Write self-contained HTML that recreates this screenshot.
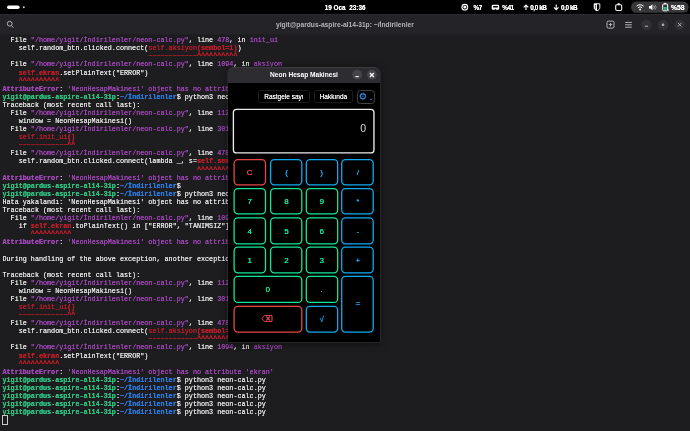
<!DOCTYPE html>
<html lang="tr"><head><meta charset="utf-8"><title>Neon Hesap Makinesi</title>
<style>
html,body{margin:0;padding:0;background:#1d1d20;}
body{width:690px;height:431px;position:relative;overflow:hidden;font-family:"Liberation Sans",sans-serif;}
#top{position:absolute;left:0;top:0;width:690px;height:14px;background:#000;color:#fff;font-weight:bold;font-size:6.4px;line-height:14px;}
#top span{position:absolute;top:0.8px;white-space:pre;text-shadow:0 0 0.3px #fff;}
#top span.s{letter-spacing:-0.42px}
#hdr{position:absolute;left:0;top:14px;width:690px;height:21px;background:#242428;box-shadow:inset 0 1px 0 #2b2b2f,inset 0 -1px 0 #1f1f22;}
#hdr .t{position:absolute;left:276px;top:0;line-height:21.6px;font-size:6.71px;font-weight:bold;color:#b4b4b6;white-space:pre;}
.cb{position:absolute;width:10.6px;height:10.6px;border-radius:50%;background:#313135;}
#term{position:absolute;left:0;top:35px;width:690px;height:396px;background:#1d1d20;}
.ln{position:absolute;left:2.5px;white-space:pre;font-family:"Liberation Mono",monospace;font-size:6.755px;line-height:7.093px;height:7.093px;color:#e4e4e4;text-shadow:0 0 0.35px currentColor;transform:scaleY(1.14);transform-origin:0 0;}
.ln b{font-weight:bold}
.p{color:#a347ba}.r{color:#c01c28}.g{color:#2ec27e}.b{color:#2a7bde}
#cur{position:absolute;left:2.4px;top:415.44px;width:3.2px;height:7.4px;border:0.9px solid #c8c8c8;}
#win{position:absolute;left:228.0px;top:67.0px;width:152px;height:275px;background:#000;border-radius:5.5px 5.5px 0 0;box-shadow:0 2px 7px 1px rgba(0,0,0,.45);z-index:5;}
#wo{position:absolute;left:227px;top:67px;width:152px;height:274px;border:1px solid rgba(255,255,255,.075);border-radius:6px 6px 0 0;z-index:6;}
#wt{position:absolute;left:0;top:0;width:100%;height:16px;border-radius:5.5px 5.5px 0 0;background:#2d2d31;color:#fff;font-weight:bold;font-size:6.6px;line-height:15.4px;text-align:center;}
.wb{position:absolute;top:2.8px;width:10px;height:10px;border-radius:50%;background:#444448;}
.tb{position:absolute;top:23.4px;height:11.4px;border:0.8px solid #1a1a1a;border-radius:1.5px;color:#f2f2f2;text-shadow:0 0 0.25px #fff;font-size:6.5px;line-height:11.6px;text-align:center;white-space:pre;}
#disp{position:absolute;left:5.1px;top:41.8px;width:139.4px;height:42.8px;border:1.2px solid transparent;border-radius:3.5px;color:#dedede;font-size:10.5px;line-height:37.4px;text-align:right;}
#disp span{padding-right:7.2px}
.k{position:absolute;box-sizing:border-box;text-shadow:0 0 0.3px currentColor;font-family:"Liberation Sans",sans-serif;font-size:8.1px;padding-top:0.5px;text-align:center;display:flex;align-items:center;justify-content:center;}
.kr{color:#f04a4a}
.kb{color:#10b0ff}
.kg{color:#12f09a}
#lines,#top,#hdr .t,#wt,.tb,#disp,.k{will-change:transform}
</style></head><body>
<div id="top">
<svg width="690" height="14" viewBox="0 0 690 14" style="position:absolute;left:0;top:0">
<rect x="7" y="5.5" width="12.6" height="3.5" rx="1.75" fill="#fff"/>
<circle cx="23.8" cy="7.25" r="1" fill="#ccc"/>
<!-- cpu -->
<circle cx="464.8" cy="7.2" r="3.4" fill="#fff"/>
<circle cx="464.8" cy="7.2" r="2.25" fill="#111"/>
<circle cx="464.8" cy="7.2" r="1.35" fill="#fff"/>
<!-- ram -->
<rect x="491.7" y="4.7" width="7.5" height="5" rx="1.3" fill="#fff"/>
<rect x="493.1" y="5.9" width="4.7" height="1.7" rx="0.3" fill="#000"/>
<rect x="494.9" y="8.9" width="1.1" height="0.9" fill="#000"/>
<!-- arrows -->
<path d="M526 10.1V5M523.7 7.3 526 5l2.3 2.3" fill="none" stroke="#fff" stroke-width="1.1"/>
<path d="M556.2 4.5v5.1M553.9 7.3l2.3 2.3 2.3-2.3" fill="none" stroke="#fff" stroke-width="1.1"/>
<!-- shield -->
<path d="M594.2 3.8h5.6v3.6c0 1.7-1.2 2.8-2.8 3.4-1.6-.6-2.8-1.7-2.8-3.4z" fill="none" stroke="#fff" stroke-width="0.95"/>
<path d="M594.2 3.8h2.8v7c-1.6-.6-2.8-1.7-2.8-3.4z" fill="#fff"/>
<path d="M595.6 5v3.6" stroke="#000" stroke-width="0.6"/>
<!-- clipboard -->
<rect x="615.7" y="4.7" width="6" height="5.7" rx="1.1" fill="none" stroke="#fff" stroke-width="1.05"/>
<rect x="617.5" y="3.3" width="2.4" height="1.7" rx="0.4" fill="#fff"/>
<!-- pill -->
<rect x="631" y="1.6" width="57.6" height="11.2" rx="5.6" fill="#38383a"/>
<!-- wifi -->
<path d="M636.6 6.2a5 5 0 0 1 7 0" fill="none" stroke="#fff" stroke-width="1"/>
<path d="M638 7.8a3 3 0 0 1 4.2 0" fill="none" stroke="#fff" stroke-width="1"/>
<circle cx="640.1" cy="9.5" r="0.9" fill="#fff"/>
<!-- volume -->
<path d="M649 6h1.4l2-1.8v6l-2-1.8H649z" fill="#fff"/>
<path d="M653.6 5.6a2.2 2.2 0 0 1 0 3.2" fill="none" stroke="#fff" stroke-width="0.7"/>
<path d="M654.9 4.5a3.8 3.8 0 0 1 0 5.4" fill="none" stroke="#aaa" stroke-width="0.7"/>
<!-- battery -->
<rect x="662.7" y="4" width="5" height="6.8" rx="1" fill="none" stroke="#fff" stroke-width="1"/>
<rect x="664.2" y="2.9" width="2" height="1.2" fill="#fff"/>
<rect x="663.8" y="7" width="2.8" height="2.8" fill="#2ec27e"/>
<path d="M667 9.2l1.8 1.2" stroke="#fff" stroke-width="1"/>
</svg>
<span style="left:324.7px">19 Oca  23:36</span>
<span class="s" style="left:473.5px">%7</span>
<span class="s" style="left:502.2px">%41</span>
<span class="s" style="left:530.2px">0,0 kB</span>
<span class="s" style="left:561px">0,0 kB</span>
<span style="left:671px;font-size:6.8px">%58</span>
</div>
<div id="hdr">
<svg width="690" height="21" viewBox="0 14 690 21" style="position:absolute;left:0;top:0">
<circle cx="9.7" cy="23.7" r="2.4" fill="none" stroke="#c0c0c0" stroke-width="0.9"/>
<path d="M11.4 25.6l1.9 2" stroke="#c0c0c0" stroke-width="1"/>
<rect x="607" y="21.1" width="7" height="7" rx="1.4" fill="none" stroke="#c4c4c4" stroke-width="0.9"/>
<path d="M610.5 22.9v3.4M608.8 24.6h3.4" stroke="#c4c4c4" stroke-width="0.9"/>
<path d="M625.2 22.4h6.6M625.2 24.8h6.6M625.2 27.2h6.6" stroke="#c4c4c4" stroke-width="0.9"/>
<circle cx="646.5" cy="24.7" r="5.3" fill="#313135"/>
<circle cx="663" cy="24.7" r="5.3" fill="#313135"/>
<circle cx="679.7" cy="24.7" r="5.3" fill="#313135"/>
<path d="M645 26.2h3" stroke="#b4b4b6" stroke-width="1"/>
<rect x="661.8" y="23.6" width="2.4" height="2.3" rx="0.5" fill="#a8a8aa"/>
<path d="M678 23l3.4 3.4M681.4 23l-3.4 3.4" stroke="#b8b8ba" stroke-width="0.9"/>
</svg>
<div class="t">yigit@pardus-aspire-al14-31p: ~/İndirilenler</div>
</div>
<div id="term">
</div>
<div id="lines">
<div class="ln" style="top:36.20px">  File <span class="p">"/home/yigit/İndirilenler/neon-calc.py"</span>, line <span class="p">478</span>, in <span class="p">init_ui</span></div>
<div class="ln" style="top:44.29px">    self.random_btn.clicked.connect(<span class="r">self.aksiyon</span><b class="r">(sembol=1)</b>)</div>
<div class="ln" style="top:52.37px">                                    <span class="r">~~~~~~~~~~~~</span><b class="r">^^^^^^^^^^</b></div>
<div class="ln" style="top:60.46px">  File <span class="p">"/home/yigit/İndirilenler/neon-calc.py"</span>, line <span class="p">1094</span>, in <span class="p">aksiyon</span></div>
<div class="ln" style="top:68.54px">    <b class="r">self.ekran</b>.setPlainText("ERROR")</div>
<div class="ln" style="top:76.63px">    <b class="r">^^^^^^^^^^</b></div>
<div class="ln" style="top:84.72px"><b class="p">AttributeError</b>: <span class="p">'NeonHesapMakinesi' object has no attribute 'ekran'</span></div>
<div class="ln" style="top:92.80px"><b class="g">yigit@pardus-aspire-al14-31p</b>:<b class="b">~/İndirilenler</b>$ python3 neon-calc.py</div>
<div class="ln" style="top:100.89px">Traceback (most recent call last):</div>
<div class="ln" style="top:108.97px">  File <span class="p">"/home/yigit/İndirilenler/neon-calc.py"</span>, line <span class="p">1122</span>, in <span class="p">&lt;module&gt;</span></div>
<div class="ln" style="top:117.06px">    window = NeonHesapMakinesi()</div>
<div class="ln" style="top:125.15px">  File <span class="p">"/home/yigit/İndirilenler/neon-calc.py"</span>, line <span class="p">301</span>, in <span class="p">__init__</span></div>
<div class="ln" style="top:133.23px">    <span class="r">self.init_ui</span><b class="r">()</b></div>
<div class="ln" style="top:141.32px">    <span class="r">~~~~~~~~~~~~</span><b class="r">^^</b></div>
<div class="ln" style="top:149.40px">  File <span class="p">"/home/yigit/İndirilenler/neon-calc.py"</span>, line <span class="p">478</span>, in <span class="p">init_ui</span></div>
<div class="ln" style="top:157.49px">    self.random_btn.clicked.connect(lambda _, s=<b class="r">self.sembol</b>: self.aksiyon(s))</div>
<div class="ln" style="top:165.58px">                                                <b class="r">^^^^^^^^^^^</b></div>
<div class="ln" style="top:173.66px"><b class="p">AttributeError</b>: <span class="p">'NeonHesapMakinesi' object has no attribute 'sembol'</span></div>
<div class="ln" style="top:181.75px"><b class="g">yigit@pardus-aspire-al14-31p</b>:<b class="b">~/İndirilenler</b>$</div>
<div class="ln" style="top:189.83px"><b class="g">yigit@pardus-aspire-al14-31p</b>:<b class="b">~/İndirilenler</b>$ python3 neon-calc.py</div>
<div class="ln" style="top:197.92px">Hata yakalandı: 'NeonHesapMakinesi' object has no attribute 'ekran'</div>
<div class="ln" style="top:206.01px">Traceback (most recent call last):</div>
<div class="ln" style="top:214.09px">  File <span class="p">"/home/yigit/İndirilenler/neon-calc.py"</span>, line <span class="p">1094</span>, in <span class="p">aksiyon</span></div>
<div class="ln" style="top:222.18px">    if <b class="r">self.ekran</b>.toPlainText() in ["ERROR", "TANIMSIZ"]:</div>
<div class="ln" style="top:230.26px">       <b class="r">^^^^^^^^^^</b></div>
<div class="ln" style="top:238.35px"><b class="p">AttributeError</b>: <span class="p">'NeonHesapMakinesi' object has no attribute 'ekran'</span></div>
<div class="ln" style="top:254.52px">During handling of the above exception, another exception occurred:</div>
<div class="ln" style="top:270.69px">Traceback (most recent call last):</div>
<div class="ln" style="top:278.78px">  File <span class="p">"/home/yigit/İndirilenler/neon-calc.py"</span>, line <span class="p">1122</span>, in <span class="p">&lt;module&gt;</span></div>
<div class="ln" style="top:286.87px">    window = NeonHesapMakinesi()</div>
<div class="ln" style="top:294.95px">  File <span class="p">"/home/yigit/İndirilenler/neon-calc.py"</span>, line <span class="p">301</span>, in <span class="p">__init__</span></div>
<div class="ln" style="top:303.04px">    <span class="r">self.init_ui</span><b class="r">()</b></div>
<div class="ln" style="top:311.12px">    <span class="r">~~~~~~~~~~~~</span><b class="r">^^</b></div>
<div class="ln" style="top:319.21px">  File <span class="p">"/home/yigit/İndirilenler/neon-calc.py"</span>, line <span class="p">478</span>, in <span class="p">init_ui</span></div>
<div class="ln" style="top:327.30px">    self.random_btn.clicked.connect(<span class="r">self.aksiyon</span><b class="r">(sembol=1)</b>)</div>
<div class="ln" style="top:335.38px">                                    <span class="r">~~~~~~~~~~~~</span><b class="r">^^^^^^^^^^</b></div>
<div class="ln" style="top:343.47px">  File <span class="p">"/home/yigit/İndirilenler/neon-calc.py"</span>, line <span class="p">1094</span>, in <span class="p">aksiyon</span></div>
<div class="ln" style="top:351.55px">    <b class="r">self.ekran</b>.setPlainText("ERROR")</div>
<div class="ln" style="top:359.64px">    <b class="r">^^^^^^^^^^</b></div>
<div class="ln" style="top:367.73px"><b class="p">AttributeError</b>: <span class="p">'NeonHesapMakinesi' object has no attribute 'ekran'</span></div>
<div class="ln" style="top:375.81px"><b class="g">yigit@pardus-aspire-al14-31p</b>:<b class="b">~/İndirilenler</b>$ python3 neon-calc.py</div>
<div class="ln" style="top:383.90px"><b class="g">yigit@pardus-aspire-al14-31p</b>:<b class="b">~/İndirilenler</b>$ python3 neon-calc.py</div>
<div class="ln" style="top:391.98px"><b class="g">yigit@pardus-aspire-al14-31p</b>:<b class="b">~/İndirilenler</b>$ python3 neon-calc.py</div>
<div class="ln" style="top:400.07px"><b class="g">yigit@pardus-aspire-al14-31p</b>:<b class="b">~/İndirilenler</b>$ python3 neon-calc.py</div>
<div class="ln" style="top:408.16px"><b class="g">yigit@pardus-aspire-al14-31p</b>:<b class="b">~/İndirilenler</b>$ python3 neon-calc.py</div>
<div id="cur"></div>
</div>
<div id="wo"></div>
<div id="win">
<div id="wt">Neon Hesap Makinesi</div>
<svg width="153" height="16" viewBox="228 67 153 16" style="position:absolute;left:0;top:0">
<circle cx="357.1" cy="74.7" r="4.9" fill="#454549"/>
<circle cx="371.9" cy="74.7" r="4.9" fill="#454549"/>
<path d="M355.4 76.6h3.4" stroke="#fff" stroke-width="1.1"/>
<path d="M369.9 73l4 4M373.9 73l-4 4" stroke="#fff" stroke-width="1.15"/>
</svg>
<div class="tb" style="left:30.3px;width:49.8px">Rastgele sayı</div>
<div class="tb" style="left:86.3px;width:36.8px">Hakkında</div>
<div class="tb" style="left:128.9px;width:16.4px;top:23px;height:11.6px;border:1px solid #434346;border-radius:3.4px"></div>
<svg width="20" height="14" viewBox="357 90 20 14" style="position:absolute;left:129px;top:23px">
<circle cx="362.9" cy="96.3" r="2.45" fill="none" stroke="#2f86e8" stroke-width="1.05"/>
<circle cx="362.9" cy="96.3" r="3.15" fill="none" stroke="#2f86e8" stroke-width="0.9" stroke-dasharray="1.24 1.234" stroke-dashoffset="0.62"/>
<path d="M362.1 96.3h1.6" stroke="#2f86e8" stroke-width="0.7"/>
<path d="M370.1 99.3h2" stroke="#2f86e8" stroke-width="1"/>
</svg>
<div id="disp"><span>0</span></div>
<svg width="152" height="275" viewBox="0 0 152 275" style="position:absolute;left:0;top:0" fill="none" stroke-width="1.3"><rect x="6.10" y="92.65" width="31.40" height="25.25" rx="3.8" stroke="#e44848"/><rect x="42.60" y="92.65" width="31.20" height="25.25" rx="3.8" stroke="#0eaaf2"/><rect x="78.30" y="92.65" width="31.35" height="25.25" rx="3.8" stroke="#0eaaf2"/><rect x="113.70" y="92.65" width="31.50" height="25.25" rx="3.8" stroke="#0eaaf2"/><rect x="6.10" y="121.60" width="31.40" height="25.25" rx="3.8" stroke="#12e694"/><rect x="42.60" y="121.60" width="31.20" height="25.25" rx="3.8" stroke="#12e694"/><rect x="78.30" y="121.60" width="31.35" height="25.25" rx="3.8" stroke="#12e694"/><rect x="113.70" y="121.60" width="31.50" height="25.25" rx="3.8" stroke="#0eaaf2"/><rect x="6.10" y="150.80" width="31.40" height="26.00" rx="3.8" stroke="#12e694"/><rect x="42.60" y="150.80" width="31.20" height="26.00" rx="3.8" stroke="#12e694"/><rect x="78.30" y="150.80" width="31.35" height="26.00" rx="3.8" stroke="#12e694"/><rect x="113.70" y="150.80" width="31.50" height="26.00" rx="3.8" stroke="#0eaaf2"/><rect x="6.10" y="180.10" width="31.40" height="25.75" rx="3.8" stroke="#12e694"/><rect x="42.60" y="180.10" width="31.20" height="25.75" rx="3.8" stroke="#12e694"/><rect x="78.30" y="180.10" width="31.35" height="25.75" rx="3.8" stroke="#12e694"/><rect x="113.70" y="180.10" width="31.50" height="25.75" rx="3.8" stroke="#0eaaf2"/><rect x="6.10" y="209.45" width="67.70" height="26.00" rx="3.8" stroke="#12e694"/><rect x="78.30" y="209.45" width="31.35" height="26.00" rx="3.8" stroke="#12e694"/><rect x="113.70" y="209.45" width="31.50" height="55.70" rx="3.8" stroke="#0eaaf2"/><rect x="6.10" y="239.30" width="67.70" height="25.85" rx="3.8" stroke="#e44848"/><rect x="78.30" y="239.30" width="31.35" height="25.85" rx="3.8" stroke="#0eaaf2"/><rect x="5.40" y="42.30" width="140.55" height="43.55" rx="3.2" stroke="#ececec" stroke-width="1.35"/></svg>
<div class="k kr" style="left:6.10px;top:92.65px;width:31.40px;height:25.25px">C</div>
<div class="k kb" style="left:42.60px;top:92.65px;width:31.20px;height:25.25px">(</div>
<div class="k kb" style="left:78.30px;top:92.65px;width:31.35px;height:25.25px">)</div>
<div class="k kb" style="left:113.70px;top:92.65px;width:31.50px;height:25.25px">/</div>
<div class="k kg" style="left:6.10px;top:121.60px;width:31.40px;height:25.25px">7</div>
<div class="k kg" style="left:42.60px;top:121.60px;width:31.20px;height:25.25px">8</div>
<div class="k kg" style="left:78.30px;top:121.60px;width:31.35px;height:25.25px">9</div>
<div class="k kb" style="left:113.70px;top:121.60px;width:31.50px;height:25.25px">*</div>
<div class="k kg" style="left:6.10px;top:150.80px;width:31.40px;height:26.00px">4</div>
<div class="k kg" style="left:42.60px;top:150.80px;width:31.20px;height:26.00px">5</div>
<div class="k kg" style="left:78.30px;top:150.80px;width:31.35px;height:26.00px">6</div>
<div class="k kb" style="left:113.70px;top:150.80px;width:31.50px;height:26.00px">-</div>
<div class="k kg" style="left:6.10px;top:180.10px;width:31.40px;height:25.75px">1</div>
<div class="k kg" style="left:42.60px;top:180.10px;width:31.20px;height:25.75px">2</div>
<div class="k kg" style="left:78.30px;top:180.10px;width:31.35px;height:25.75px">3</div>
<div class="k kb" style="left:113.70px;top:180.10px;width:31.50px;height:25.75px">+</div>
<div class="k kg" style="left:6.10px;top:209.45px;width:67.70px;height:26.00px">0</div>
<div class="k kg" style="left:78.30px;top:209.45px;width:31.35px;height:26.00px">.</div>
<div class="k kb" style="left:113.70px;top:209.45px;width:31.50px;height:55.70px"><span style="margin-top:-1.6px">=</span></div>
<div class="k kr" style="left:6.10px;top:239.30px;width:67.70px;height:25.85px"><svg width="12" height="7" viewBox="0 0 12 7" style="margin:-1.5px 1.4px 0 0"><path d="M3.7 0.6H11v5.8H3.7L0.7 3.5z" fill="none" stroke="#ee4848" stroke-width="1" stroke-linejoin="round"/><path d="M5.3 1.7l3.6 3.6M8.9 1.7l-3.6 3.6" stroke="#ee4848" stroke-width="1.1"/></svg></div>
<div class="k kb" style="left:78.30px;top:239.30px;width:31.35px;height:25.85px">√</div>
</div>
</body></html>
